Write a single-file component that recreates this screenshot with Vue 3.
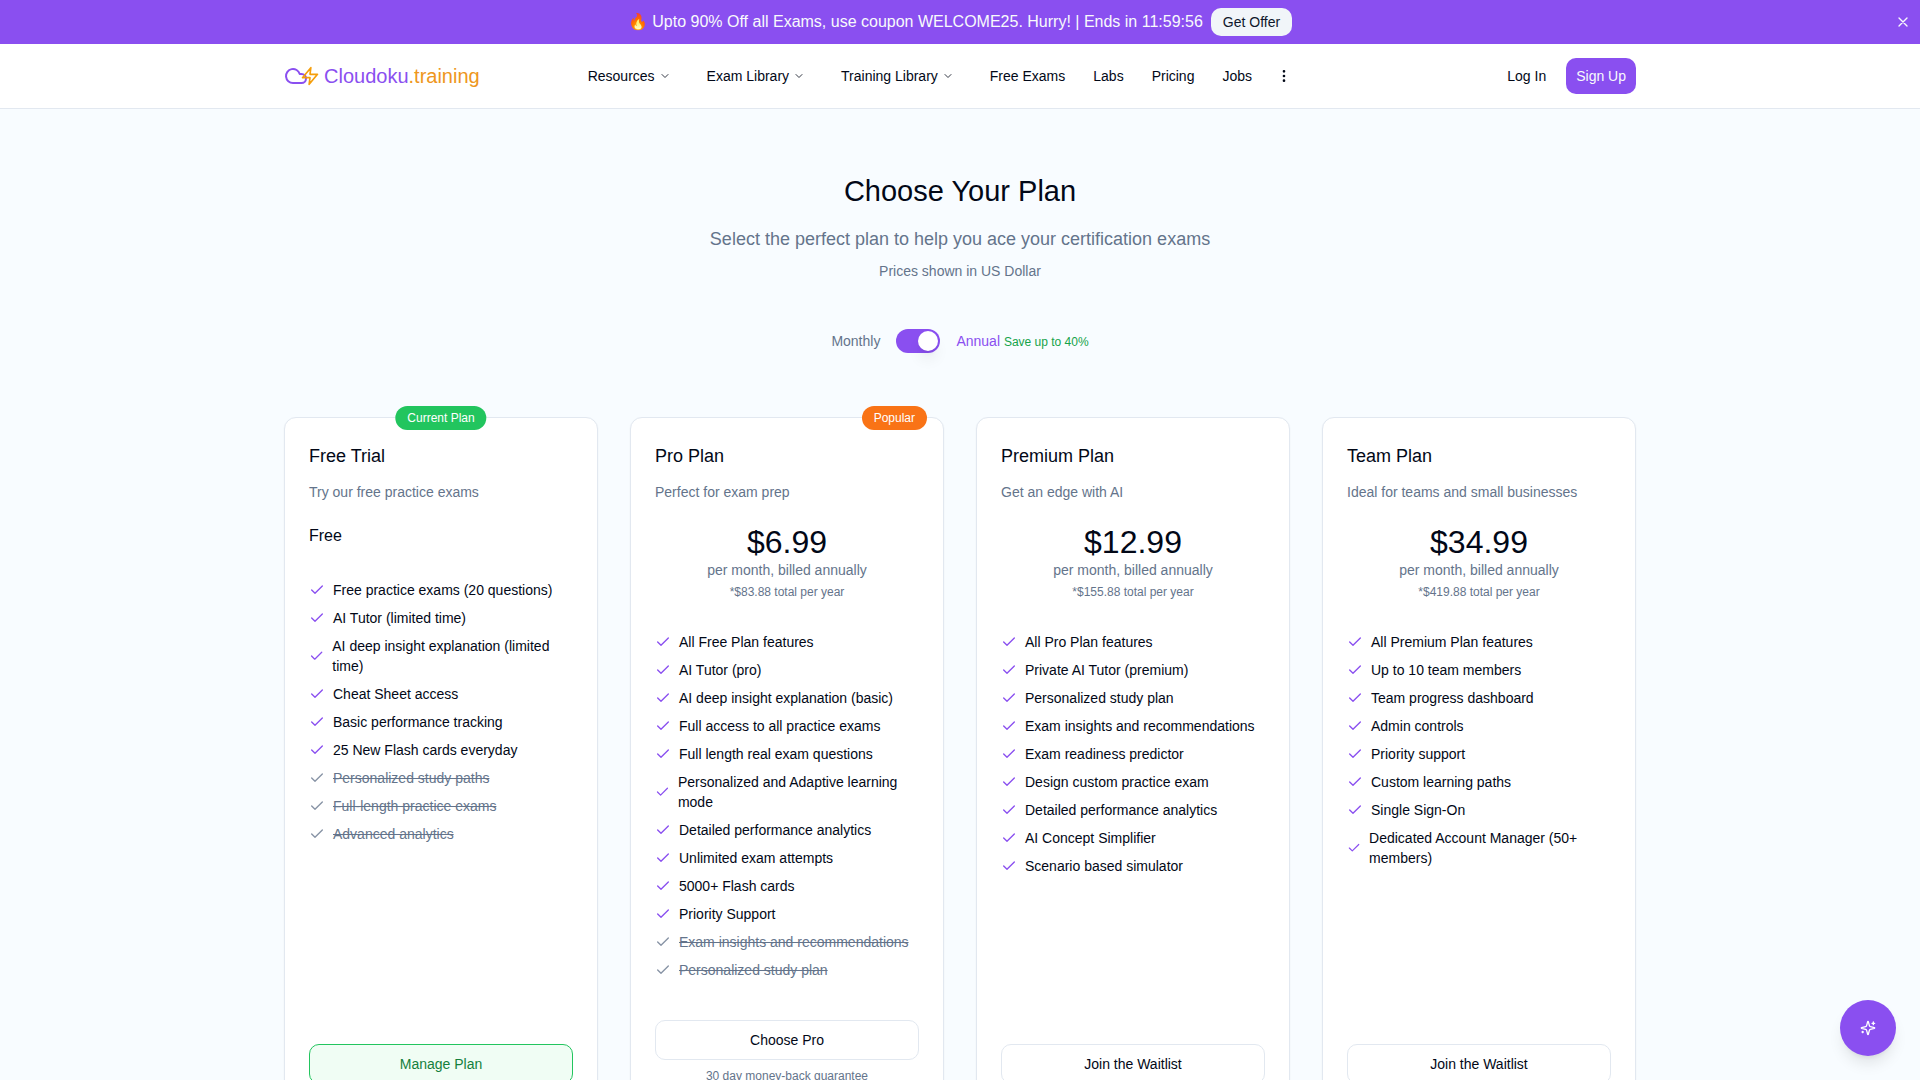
<script setup>
import { ref } from 'vue'

const annual = ref(true)
const showBanner = ref(true)

const menus = ['Resources', 'Exam Library', 'Training Library']
const links = ['Free Exams', 'Labs', 'Pricing', 'Jobs']

const plans = [
  {
    name: 'Free Trial',
    blurb: 'Try our free practice exams',
    badge: 'Current Plan',
    badgeClass: 'badge-current',
    action: 'Manage Plan',
    actionClass: 'action-current',
    features: [
      'Free practice exams (20 questions)',
      'AI Tutor (limited time)',
      'AI deep insight explanation (limited time)',
      'Cheat Sheet access',
      'Basic performance tracking',
      '25 New Flash cards everyday',
    ],
    missing: ['Personalized study paths', 'Full-length practice exams', 'Advanced analytics'],
  },
  {
    name: 'Pro Plan',
    blurb: 'Perfect for exam prep',
    badge: 'Popular',
    badgeClass: 'badge-popular',
    price: '$6.99',
    total: '*$83.88 total per year',
    action: 'Choose Pro',
    note: '30 day money-back guarantee',
    features: [
      'All Free Plan features',
      'AI Tutor (pro)',
      'AI deep insight explanation (basic)',
      'Full access to all practice exams',
      'Full length real exam questions',
      'Personalized and Adaptive learning mode',
      'Detailed performance analytics',
      'Unlimited exam attempts',
      '5000+ Flash cards',
      'Priority Support',
    ],
    missing: ['Exam insights and recommendations', 'Personalized study plan'],
  },
  {
    name: 'Premium Plan',
    blurb: 'Get an edge with AI',
    price: '$12.99',
    total: '*$155.88 total per year',
    action: 'Join the Waitlist',
    features: [
      'All Pro Plan features',
      'Private AI Tutor (premium)',
      'Personalized study plan',
      'Exam insights and recommendations',
      'Exam readiness predictor',
      'Design custom practice exam',
      'Detailed performance analytics',
      'AI Concept Simplifier',
      'Scenario based simulator',
    ],
    missing: [],
  },
  {
    name: 'Team Plan',
    blurb: 'Ideal for teams and small businesses',
    price: '$34.99',
    total: '*$419.88 total per year',
    action: 'Join the Waitlist',
    features: [
      'All Premium Plan features',
      'Up to 10 team members',
      'Team progress dashboard',
      'Admin controls',
      'Priority support',
      'Custom learning paths',
      'Single Sign-On',
      'Dedicated Account Manager (50+ members)',
    ],
    missing: [],
  },
]
</script>

<template>
  <div class="page">
    <aside v-if="showBanner" class="banner">
      <p class="banner-text">🔥 Upto 90% Off all Exams, use coupon WELCOME25. Hurry! | Ends in 11:59:56</p>
      <button type="button" class="offer">Get Offer</button>
      <button type="button" class="close" aria-label="Close" @click="showBanner = false">
        <svg class="icon" viewBox="0 0 24 24"><path d="M18 6 6 18M6 6l12 12" /></svg>
      </button>
    </aside>

    <header class="header">
      <div class="container header-row">
        <a href="#" class="logo">
          <svg class="icon cloud" viewBox="0 0 24 24"><path d="M17.5 19H9a7 7 0 1 1 6.71-9h1.79a4.5 4.5 0 1 1 0 9Z" /></svg>
          <svg class="icon zap" viewBox="0 0 24 24"><path d="M13 2 3 14h9l-1 8 10-12h-9l1-8z" /></svg>
          <span class="logo-text">Cloudoku<span class="logo-tail">.training</span></span>
        </a>
        <nav class="nav">
          <button v-for="menu in menus" :key="menu" type="button" class="menu">
            {{ menu }}
            <svg class="icon chevron" viewBox="0 0 24 24"><path d="m6 9 6 6 6-6" /></svg>
          </button>
          <a v-for="link in links" :key="link" href="#" class="nav-link">{{ link }}</a>
          <button type="button" class="more" aria-label="More">
            <svg class="icon" viewBox="0 0 24 24">
              <circle cx="12" cy="12" r="1" /><circle cx="12" cy="5" r="1" /><circle cx="12" cy="19" r="1" />
            </svg>
          </button>
        </nav>
        <div class="account">
          <a href="#" class="login">Log In</a>
          <button type="button" class="signup">Sign Up</button>
        </div>
      </div>
    </header>

    <main class="container main">
      <h1 class="title">Choose Your Plan</h1>
      <p class="subtitle">Select the perfect plan to help you ace your certification exams</p>
      <p class="currency">Prices shown in US Dollar</p>

      <div class="billing">
        <label for="billing-switch" :class="{ chosen: !annual }">Monthly</label>
        <input id="billing-switch" v-model="annual" class="switch" type="checkbox" role="switch" />
        <label for="billing-switch" :class="{ chosen: annual }">Annual <span class="save">Save up to 40%</span></label>
      </div>

      <section class="plans">
        <article v-for="plan in plans" :key="plan.name" class="card">
          <span v-if="plan.badge" class="badge" :class="plan.badgeClass">{{ plan.badge }}</span>
          <h2 class="plan-name">{{ plan.name }}</h2>
          <p class="blurb">{{ plan.blurb }}</p>
          <div v-if="plan.price" class="cost">
            <p class="price">{{ plan.price }}</p>
            <p class="period">per month, billed annually</p>
            <p class="total">{{ plan.total }}</p>
          </div>
          <p v-else class="free">Free</p>
          <ul class="features">
            <li v-for="item in plan.features" :key="item">
              <svg class="icon check" viewBox="0 0 24 24"><path d="M20 6 9 17l-5-5" /></svg>
              <span>{{ item }}</span>
            </li>
            <li v-for="item in plan.missing" :key="item" class="missing">
              <svg class="icon check" viewBox="0 0 24 24"><path d="M20 6 9 17l-5-5" /></svg>
              <span>{{ item }}</span>
            </li>
          </ul>
          <div class="card-foot">
            <button type="button" class="action" :class="plan.actionClass">{{ plan.action }}</button>
            <p v-if="plan.note" class="note">{{ plan.note }}</p>
          </div>
        </article>
      </section>
    </main>

    <button type="button" class="assistant" aria-label="Open assistant">
      <svg class="icon" viewBox="0 0 24 24">
        <path d="M9.937 15.5A2 2 0 0 0 8.5 14.063l-6.135-1.582a.5.5 0 0 1 0-.962L8.5 9.936A2 2 0 0 0 9.937 8.5l1.582-6.135a.5.5 0 0 1 .963 0L14.063 8.5A2 2 0 0 0 15.5 9.937l6.135 1.581a.5.5 0 0 1 0 .964L15.5 14.063a2 2 0 0 0-1.437 1.437l-1.582 6.135a.5.5 0 0 1-.963 0z" />
        <path d="M20 3v4M22 5h-4M4 17v2M5 18H3" />
      </svg>
    </button>
  </div>
</template>

<style>
body {
  margin: 0;
  background: #f8fcff;
}
</style>

<style scoped>
.page {
  --primary: #8a4ff0;
  --ink: #020817;
  --muted: #64748b;
  --line: #e2e8f0;
  min-height: 100vh;
  color: var(--ink);
  font-family: "Liberation Sans", Arial, sans-serif;
  font-size: 14px;
  line-height: 20px;
}

.page *,
.page *::before {
  box-sizing: border-box;
}

p,
h1,
h2,
ul {
  margin: 0;
  padding: 0;
  font-weight: 400;
}

a {
  color: inherit;
  text-decoration: none;
}

button {
  display: inline-flex;
  align-items: center;
  justify-content: center;
  padding: 0;
  border: 0;
  background: none;
  color: inherit;
  font: inherit;
  cursor: pointer;
}

.icon {
  width: 16px;
  height: 16px;
  fill: none;
  stroke: currentColor;
  stroke-width: 2;
  stroke-linecap: round;
  stroke-linejoin: round;
}

.container {
  box-sizing: border-box;
  width: 100%;
  max-width: 1400px;
  margin: 0 auto;
  padding: 0 24px;
}

.banner {
  position: relative;
  display: flex;
  align-items: center;
  justify-content: center;
  gap: 8px;
  padding: 8px;
  background: var(--primary);
  color: #f8fafc;
}

.banner-text {
  font-size: 16px;
  line-height: 24px;
}

.offer {
  height: 28px;
  padding: 0 12px;
  border-radius: 10px;
  background: #f1f5f9;
  color: #0f172a;
}

.close {
  position: absolute;
  top: 14px;
  right: 9px;
}

.header {
  border-bottom: 1px solid var(--line);
  background: #fff;
}

.header-row {
  display: flex;
  align-items: center;
  height: 64px;
}

.logo {
  display: flex;
  align-items: center;
}

.cloud {
  width: 24px;
  height: 24px;
  color: var(--primary);
}

.zap {
  width: 20px;
  height: 20px;
  margin: 0 4px 0 -8px;
  color: #f59e0b;
}

.logo-text {
  color: var(--primary);
  font-size: 20px;
  line-height: 28px;
}

.logo-tail {
  color: #ee9620;
}

.nav {
  display: flex;
  align-items: center;
  gap: 28px;
  margin-left: 108px;
}

.menu {
  gap: 4px;
  margin-right: 8px;
}

.chevron {
  width: 12px;
  height: 12px;
  opacity: 0.8;
}

.more {
  margin-left: -4px;
}

.account {
  display: flex;
  align-items: center;
  gap: 20px;
  margin-left: auto;
}

.signup {
  height: 36px;
  padding: 0 10px;
  border-radius: 10px;
  background: var(--primary);
  color: #f8fafc;
}

.main {
  padding-top: 64px;
  padding-bottom: 64px;
}

.title {
  font-size: 29px;
  line-height: 36px;
  text-align: center;
}

.subtitle {
  margin-top: 16px;
  color: var(--muted);
  font-size: 18px;
  line-height: 28px;
  text-align: center;
}

.currency {
  margin-top: 8px;
  color: var(--muted);
  text-align: center;
}

.billing {
  display: flex;
  align-items: center;
  justify-content: center;
  gap: 16px;
  margin-top: 48px;
  color: var(--muted);
}

.chosen {
  color: var(--primary);
}

.save {
  color: #16a34a;
  font-size: 12px;
}

.switch {
  appearance: none;
  width: 44px;
  height: 24px;
  margin: 0;
  padding: 2px;
  border-radius: 12px;
  background: var(--line);
  cursor: pointer;
}

.switch::before {
  content: "";
  display: block;
  width: 20px;
  height: 20px;
  border-radius: 50%;
  background: #fff;
  box-shadow: 0 10px 15px -3px rgb(0 0 0 / 0.1), 0 4px 6px -4px rgb(0 0 0 / 0.1);
}

.switch:checked {
  background: var(--primary);
}

.switch:checked::before {
  margin-left: auto;
}

.plans {
  display: grid;
  grid-template-columns: repeat(4, minmax(0, 1fr));
  gap: 32px;
  margin-top: 64px;
}

.card {
  position: relative;
  display: flex;
  flex-direction: column;
  padding: 24px;
  border: 1px solid var(--line);
  border-radius: 12px;
  background: #fff;
  box-shadow: 0 1px 2px rgb(0 0 0 / 0.05);
}

.badge {
  position: absolute;
  top: -12px;
  padding: 4px 12px;
  border-radius: 12px;
  color: #fff;
  font-size: 12px;
  line-height: 16px;
}

.badge-current {
  left: 50%;
  transform: translateX(-50%);
  background: #22c55e;
}

.badge-popular {
  right: 16px;
  background: #f97316;
}

.plan-name {
  font-size: 18px;
  line-height: 28px;
}

.blurb {
  margin-top: 12px;
  color: var(--muted);
}

.cost {
  margin-top: 22px;
  color: var(--muted);
  text-align: center;
}

.price {
  color: var(--ink);
  font-size: 32px;
  line-height: 36px;
}

.total {
  margin-top: 4px;
  font-size: 12px;
  line-height: 16px;
}

.free {
  margin-top: 22px;
  font-size: 16px;
  line-height: 24px;
}

.features {
  display: flex;
  flex-direction: column;
  gap: 8px;
  margin-top: 32px;
  list-style: none;
}

.features li {
  display: flex;
  align-items: center;
  gap: 8px;
}

.check {
  color: var(--primary);
}

.missing {
  color: var(--muted);
}

.missing .check {
  color: #8793a5;
}

.missing span {
  text-decoration: line-through;
}

.card-foot {
  margin-top: auto;
  padding-top: 40px;
}

.action {
  width: 100%;
  height: 40px;
  border: 1px solid var(--line);
  border-radius: 10px;
  background: #fff;
}

.action-current {
  border-color: #22c55e;
  background: #f0fdf4;
  color: #15803d;
}

.note {
  margin-top: 8px;
  color: var(--muted);
  font-size: 12px;
  line-height: 16px;
  text-align: center;
}

.assistant {
  position: fixed;
  right: 24px;
  bottom: 24px;
  width: 56px;
  height: 56px;
  border-radius: 50%;
  background: var(--primary);
  color: #fff;
  box-shadow: 0 10px 15px -3px rgb(0 0 0 / 0.1), 0 4px 6px -4px rgb(0 0 0 / 0.1);
}
</style>
